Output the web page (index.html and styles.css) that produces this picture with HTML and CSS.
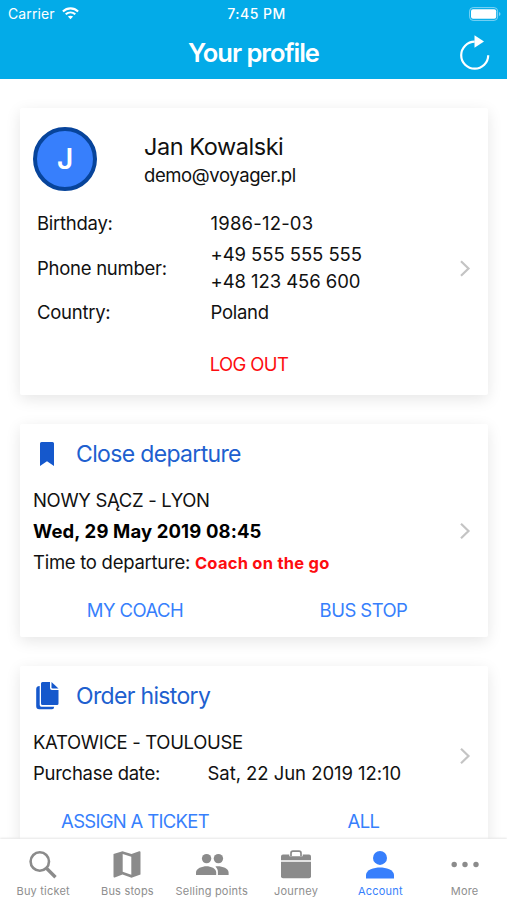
FILE: index.html
```html
<!DOCTYPE html>
<html lang="en">
<head>
<meta charset="utf-8">
<title>Your profile</title>
<link rel="stylesheet" href="styles.css">
</head>
<body>
<div class="app">
  <header class="header">
    <div class="status">
      <div class="carrier"><span>Carrier</span>
        <svg width="17" height="13" viewBox="0 0 17 13" fill="none" stroke="#fff" stroke-width="2.1"><path d="M.9 4.4C5.2.3 11.800.3 16.100 4.400"/><path d="M3.700 7.300c2.800-2.500 6.800-2.500 9.600 0"/><path d="M8.500 12.200 5.900 9.600c1.500-1.300 3.700-1.300 5.200 0z" fill="#fff" stroke="none"/></svg>
      </div>
      <div class="clock">7:45 PM</div>
      <svg class="battery" width="32" height="14" viewBox="0 0 32 14"><rect x=".6" y=".6" width="28" height="12.800" rx="3.500" fill="none" stroke="#7fd4f5"/><rect x="2" y="2.300" width="25.200" height="9.400" rx="2" fill="#fff"/><path d="M30 5v4q1.500-.7 1.500-2T30 5z" fill="#7fd4f5"/></svg>
    </div>
    <div class="titlebar">
      <h1>Your profile</h1>
      <svg class="refresh" width="32" height="36" viewBox="0 0 32 36"><path d="M29.200 20.200A13.500 13.500 0 1 1 15.700 6.700" fill="none" stroke="#fff" stroke-width="2.200"/><path d="M15.500.2 25 6.600l-9.500 6.200z" fill="#fff"/></svg>
    </div>
  </header>

  <main class="content">
    <section class="card profile">
      <div class="person">
        <div class="avatar">J</div>
        <div><div class="name"><span>Jan Kowalski</span></div><div class="email">demo@voyager.pl</div></div>
      </div>
      <dl class="details">
        <dt>Birthday:</dt><dd class="birth">1986-12-03</dd>
        <dt>Phone number:</dt><dd class="phones">+49 555 555 555<br>+48 123 456 600</dd>
        <dt>Country:</dt><dd class="country">Poland</dd>
      </dl>
      <div class="logout">LOG OUT</div>
      <svg class="chevron" width="12" height="18" viewBox="0 0 12 18"><path d="m2 1.800 7.500 7.200L2 16.200"/></svg>
    </section>

    <section class="card departure">
      <div class="heading">
        <svg width="28" height="28" viewBox="0 0 28 28"><path d="M7 3.500Q7 2 8.500 2h11Q21 2 21 3.500V26l-7-4.700L7 26z" fill="#1558cc"/></svg>
        <h2>Close departure</h2>
      </div>
      <p class="route">NOWY SĄCZ - LYON</p>
      <p class="date">Wed, 29 May 2019 08:45</p>
      <p class="remaining"><span>Time to departure:</span> <strong>Coach on the go</strong></p>
      <div class="actions"><a class="coach">MY COACH</a><a class="stop">BUS STOP</a></div>
      <svg class="chevron" width="12" height="18" viewBox="0 0 12 18"><path d="m2 1.800 7.500 7.200L2 16.200"/></svg>
    </section>

    <section class="card history">
      <div class="heading">
        <svg width="28" height="30" viewBox="0 0 28 30" fill="#1558cc"><path d="M9.500 1H17v6q0 2 2 2h6.500v13.500q0 1.500-1.500 1.500H9.500Q8 24 8 22.500v-20Q8 1 9.500 1z"/><path d="M18.500 1 25.500 7.500h-5.700q-1.300 0-1.300-1.300z"/><path d="M6.700 5v19q0 1.700 1.700 1.700h12.800q-.2 2.600-2.200 2.600H6.200Q3.200 28.300 3.200 25.300V8q0-3 3.500-3z"/></svg>
        <h2>Order history</h2>
      </div>
      <p class="route">KATOWICE - TOULOUSE</p>
      <p class="purchase"><span>Purchase date:</span><span class="ordered">Sat, 22 Jun 2019 12:10</span></p>
      <div class="actions"><a class="assign">ASSIGN A TICKET</a><a>ALL</a></div>
      <svg class="chevron" width="12" height="18" viewBox="0 0 12 18"><path d="m2 1.800 7.500 7.200L2 16.200"/></svg>
    </section>
  </main>

  <nav class="tabs">
    <a><svg width="32" height="30" viewBox="0 0 32 30" fill="none" stroke="#8b8b8b"><circle cx="12.800" cy="11.500" r="9.200" stroke-width="2.600"/><path d="m19 17.700 9.500 9.500" stroke-width="3.400"/></svg><span>Buy ticket</span></a>
    <a><svg width="32" height="30" viewBox="0 0 32 30"><path d="m2.500 4 9-2.800 9 2.800 7.700-2.700q1.300-.3 1.300 1V24.500l-9 3.300-9-3.300-7.800 2.900q-1.200.4-1.200-.9z" fill="#8b8b8b"/><path d="m11.700 4 8.600 2.700v18l-8.600-3z" fill="#fff"/></svg><span>Bus stops</span></a>
    <a><svg width="36" height="30" viewBox="0 0 36 30" fill="#8b8b8b"><circle cx="12.600" cy="8.600" r="4.700"/><circle cx="24.400" cy="8.600" r="4.700"/><path d="M2 25v-2.500c0-4.200 6.200-6.300 10.500-6.300S22.200 18.300 22.200 22.500V25z"/><path d="M23.900 25v-3c0-2.300-1-4.100-2.500-5.500 5-.9 13.200 1.400 13.200 6V25z"/></svg><span>Selling points</span></a>
    <a><svg width="34" height="30" viewBox="0 0 34 30"><path d="M12 6V3.200q0-2 2-2h6q2 0 2 2V6" fill="none" stroke="#8b8b8b" stroke-width="1.700"/><path d="M4 4.500h6.300v1.700h13.400V4.500H30q2 0 2 2v3.800H2V6.500q0-2 2-2z" fill="#8b8b8b"/><path d="M2 11.800h30v14.500q0 2-2 2H4q-2 0-2-2z" fill="#8b8b8b"/></svg><span>Journey</span></a>
    <a class="active"><svg width="32" height="30" viewBox="0 0 32 30" fill="#377ffc"><circle cx="16" cy="7.900" r="7"/><path d="M2 28.500V25c0-5.200 8-7.500 14-7.500S30 19.800 30 25v3.500z"/></svg><span>Account</span></a>
    <a><svg width="32" height="30" viewBox="0 0 32 30" fill="#8b8b8b"><circle cx="5.200" cy="14.500" r="2.700"/><circle cx="16" cy="14.500" r="2.700"/><circle cx="27" cy="14.500" r="2.700"/></svg><span>More</span></a>
  </nav>
</div>
</body>
</html>
```
FILE: styles.css
```css
* { box-sizing: border-box; }
body, h1, h2, p, dl, dd { margin: 0; }
body { font-family: Inter, "Liberation Sans", sans-serif; color: #111; background: #fff; }
svg { display: block; flex: none; }
.app { height: 900px; display: flex; flex-direction: column; overflow: hidden; white-space: nowrap; }

.header { height: 79px; flex: none; background: #03abe8; color: #fff; }
.status { height: 27px; display: grid; grid-template-columns: 1fr auto 1fr; align-items: center; padding: 0 6px 0 8px; }
.carrier { display: flex; align-items: center; gap: 7px; font-size: 14px; letter-spacing: .1px; }
.clock { font-size: 14px; font-weight: 500; letter-spacing: .5px; padding-left: 4px; }
.battery { justify-self: end; }
.titlebar { height: 52px; display: grid; grid-template-columns: 1fr auto 1fr; align-items: center; padding-right: 16px; }
.titlebar h1 { grid-column: 2; font-size: 25.500px; line-height: 52px; font-weight: 600; letter-spacing: -1px; padding-left: 16px; }
.refresh { justify-self: end; }

.content { flex: 1; min-height: 0; overflow: hidden; padding: 29px 19px 0 20px; display: flex; flex-direction: column; gap: 29px; background: #fff; }
.card { position: relative; flex: none; background: #fff; border-radius: 2px; box-shadow: 0 4px 15px rgba(0,0,0,.1); padding: 0 13px; font-size: 18.500px; letter-spacing: -.27px; }
.profile { height: 287px; padding-top: 19px; }
.departure { height: 213px; padding-top: 14px; }
.history { height: 230px; padding-top: 14px; }

.person { display: flex; gap: 47px; height: 64px; }
.avatar { width: 64px; height: 64px; border: 4px solid #07449b; border-radius: 50%; background: #377ffc; color: #fff; font-size: 28px; line-height: 56px; font-weight: 600; text-align: center; }
.name { font-size: 23.500px; line-height: 28px; padding-top: 6px; letter-spacing: -.45px; }
.email { line-height: 29px; letter-spacing: -.4px; }
.details { display: grid; grid-template-columns: 173.500px 1fr; grid-template-rows: 35px 54px 35px; align-items: center; padding: 15px 0 0 4px; line-height: 27px; }
.birth { letter-spacing: .2px; }
.phones { letter-spacing: -.07px; }
.logout { color: #fd0d10; text-align: center; line-height: 28px; margin-top: 20px; padding-right: 10px; letter-spacing: -.6px; }
.chevron { position: absolute; right: 17px; top: 50%; transform: translateY(7.500px); fill: none; stroke: #c4c4c4; stroke-width: 2.200; }
.departure .chevron { transform: translateY(-9px); }
.history .chevron { transform: translateY(-34px); }

.heading { display: flex; align-items: center; gap: 15px; height: 32px; color: #205fcf; }
.heading h2 { font-size: 23px; line-height: 32px; font-weight: 400; letter-spacing: -.66px; }
.route { line-height: 30px; margin-top: 15px; letter-spacing: -.33px; }
.date { line-height: 32px; font-weight: 700; color: #000; letter-spacing: .13px; }
.remaining { line-height: 31px; }
.remaining strong { color: #fd0d10; font-size: 16.500px; letter-spacing: .25px; }
.actions { display: grid; grid-template-columns: 204px 1fr; justify-items: center; line-height: 28px; margin-top: 17px; color: #377ffc; letter-spacing: -.55px; }
.history .actions { margin-top: 18px; }
.actions a:last-child { margin-right: -15px; }
.assign { letter-spacing: -.7px; }
.purchase { display: grid; grid-template-columns: 174.500px 1fr; line-height: 32px; }
.ordered { letter-spacing: -.05px; }

.tabs { height: 61px; flex: none; display: grid; grid-template-columns: repeat(6, 84.300px); background: #fff; box-shadow: 0 -1px 2px #e6e6e6; position: relative; padding: 11px 0 0 1px; }
.tabs a { display: flex; flex-direction: column; align-items: center; gap: 4px; color: #8e8e8e; font-size: 11px; line-height: 15px; letter-spacing: .2px; }
.tabs .active { color: #377ffc; }
```
